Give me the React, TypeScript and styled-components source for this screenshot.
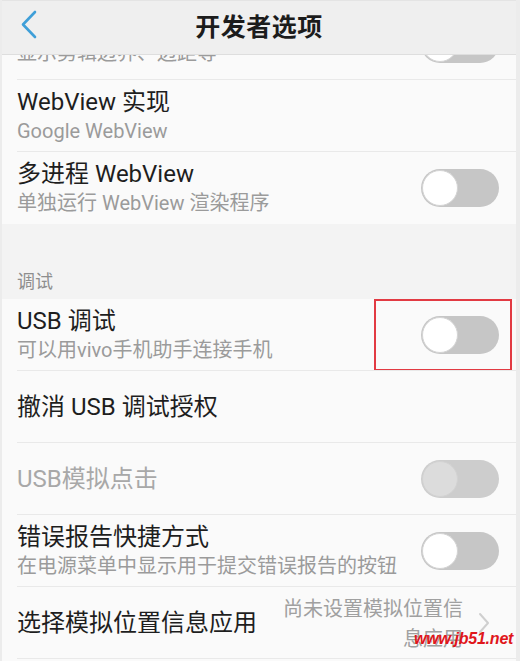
import React from "react"
import styled, { createGlobalStyle } from "styled-components"

const GlobalStyle = createGlobalStyle`
  html, body {
    margin: 0;
    padding: 0;
    background: #fafafa;
  }
  body {
    font-family: Roboto, "Noto Sans CJK SC", sans-serif;
  }
`

const Screen = styled.div`
  position: relative;
  width: 520px;
  height: 661px;
  overflow: hidden;
  background: #fafafa;
  box-sizing: border-box;
  border-left: 2px solid #ececec;
  border-right: 4px solid #ececec;
  display: flex;
  flex-direction: column;
`

const Header = styled.div`
  flex: 0 0 55px;
  display: flex;
  align-items: center;
  justify-content: center;
  position: relative;
  background: #efefef;
  border-top: 1px solid #e4e4e4;
  border-bottom: 1px solid #dedede;
  box-sizing: border-box;
`

const BackButton = styled.div`
  position: absolute;
  left: 16px;
  top: 9px;
  width: 24px;
  height: 30px;
`

const Title = styled.div`
  font-size: 25px;
  font-weight: 700;
  color: #1c1c1c;
  letter-spacing: 0.5px;
  margin-top: -6px;
`

const ClippedRow = styled.div`
  flex: 0 0 25px;
  overflow: hidden;
  display: flex;
  flex-direction: column;
  justify-content: flex-end;
`

interface RowProps {
  $last?: boolean
}

const Row = styled.div<RowProps>`
  position: relative;
  flex: 0 0 auto;
  height: 72px;
  display: flex;
  align-items: center;
  padding: 0 17px 0 15px;
  box-sizing: border-box;
  &::after {
    content: "";
    position: absolute;
    left: 15px;
    right: 0;
    bottom: 0;
    height: 1px;
    background: ${({ $last }) => ($last ? "transparent" : "#e9e9e9")};
  }
`

interface TextsProps {
  $raised?: boolean
}

const Texts = styled.div<TextsProps>`
  flex: 1;
  display: flex;
  flex-direction: column;
  min-width: 0;
  margin-bottom: ${({ $raised }) => ($raised ? "12px" : "0")};
`

interface RowTitleProps {
  $disabled?: boolean
}

const RowTitle = styled.div<RowTitleProps>`
  font-size: 24px;
  line-height: 31px;
  color: ${({ $disabled }) => ($disabled ? "#a8a8a8" : "#1e1e1e")};
  white-space: nowrap;
`

const RowSub = styled.div`
  font-size: 20px;
  line-height: 27px;
  color: #9b9b9b;
  white-space: nowrap;
`

const Section = styled.div`
  flex: 0 0 75px;
  background: #f3f3f3;
  display: flex;
  align-items: flex-end;
  padding: 0 0 6px 15px;
  box-sizing: border-box;
  font-size: 18px;
  color: #8e8e8e;
`

interface ToggleProps {
  $disabled?: boolean
}

const Toggle = styled.div<ToggleProps>`
  flex: 0 0 auto;
  position: relative;
  width: 78px;
  height: 38px;
  border-radius: 19px;
  background: ${({ $disabled }) => ($disabled ? "#cdcdcd" : "#c6c6c6")};
  &::before {
    content: "";
    position: absolute;
    left: 1px;
    top: 1px;
    width: 34px;
    height: 34px;
    border-radius: 50%;
    background: ${({ $disabled }) => ($disabled ? "#dcdcdc" : "#ffffff")};
    border: 1px solid ${({ $disabled }) => ($disabled ? "#d2d2d2" : "#d4d4d4")};
  }
`

const Highlight = styled.div`
  position: absolute;
  left: 372px;
  top: 0;
  width: 138px;
  height: 72px;
  border: 2px solid #e23a43;
  box-sizing: border-box;
`

const Value = styled.div`
  width: 190px;
  font-size: 20px;
  line-height: 30px;
  color: #a0a0a0;
  text-align: right;
  margin-right: 14px;
  margin-top: 2px;
`

const Chevron = styled.svg`
  flex: 0 0 auto;
  width: 14px;
  height: 24px;
  margin-right: 8px;
`

const Watermark = styled.div`
  position: absolute;
  left: 412px;
  top: 630px;
  font-family: "Liberation Sans", Arial, sans-serif;
  font-style: italic;
  font-weight: 700;
  font-size: 16px;
  letter-spacing: -0.2px;
  color: #e0161b;
  white-space: nowrap;
`

export default function App() {
  return (
    <Screen>
      <GlobalStyle />
      <Header>
        <BackButton>
          <svg width="24" height="30" viewBox="0 0 24 30">
            <path d="M17 2 L5 14.5 L17 27" fill="none" stroke="#3f9fd8" strokeWidth="2.6" strokeLinecap="round" strokeLinejoin="round" />
          </svg>
        </BackButton>
        <Title>开发者选项</Title>
      </Header>

      <ClippedRow>
        <Row>
          <Texts $raised>
            <RowTitle>显示布局边界</RowTitle>
            <RowSub>显示剪辑边界、边距等</RowSub>
          </Texts>
          <Toggle />
        </Row>
      </ClippedRow>

      <Row>
        <Texts>
          <RowTitle>WebView 实现</RowTitle>
          <RowSub>Google WebView</RowSub>
        </Texts>
      </Row>

      <Row $last>
        <Texts>
          <RowTitle>多进程 WebView</RowTitle>
          <RowSub>单独运行 WebView 渲染程序</RowSub>
        </Texts>
        <Toggle />
      </Row>

      <Section>调试</Section>

      <Row>
        <Texts>
          <RowTitle>USB 调试</RowTitle>
          <RowSub>可以用vivo手机助手连接手机</RowSub>
        </Texts>
        <Toggle />
        <Highlight />
      </Row>

      <Row>
        <Texts>
          <RowTitle>撤消 USB 调试授权</RowTitle>
        </Texts>
      </Row>

      <Row>
        <Texts>
          <RowTitle $disabled>USB模拟点击</RowTitle>
        </Texts>
        <Toggle $disabled />
      </Row>

      <Row>
        <Texts>
          <RowTitle>错误报告快捷方式</RowTitle>
          <RowSub>在电源菜单中显示用于提交错误报告的按钮</RowSub>
        </Texts>
        <Toggle />
      </Row>

      <Row>
        <Texts>
          <RowTitle>选择模拟位置信息应用</RowTitle>
        </Texts>
        <Value>尚未设置模拟位置信息应用</Value>
        <Chevron viewBox="0 0 14 24">
          <path d="M3 3 L11 12 L3 21" fill="none" stroke="#cfcfcf" strokeWidth="2" strokeLinecap="round" strokeLinejoin="round" />
        </Chevron>
      </Row>

      <Watermark>www.jb51.net</Watermark>
    </Screen>
  )
}
